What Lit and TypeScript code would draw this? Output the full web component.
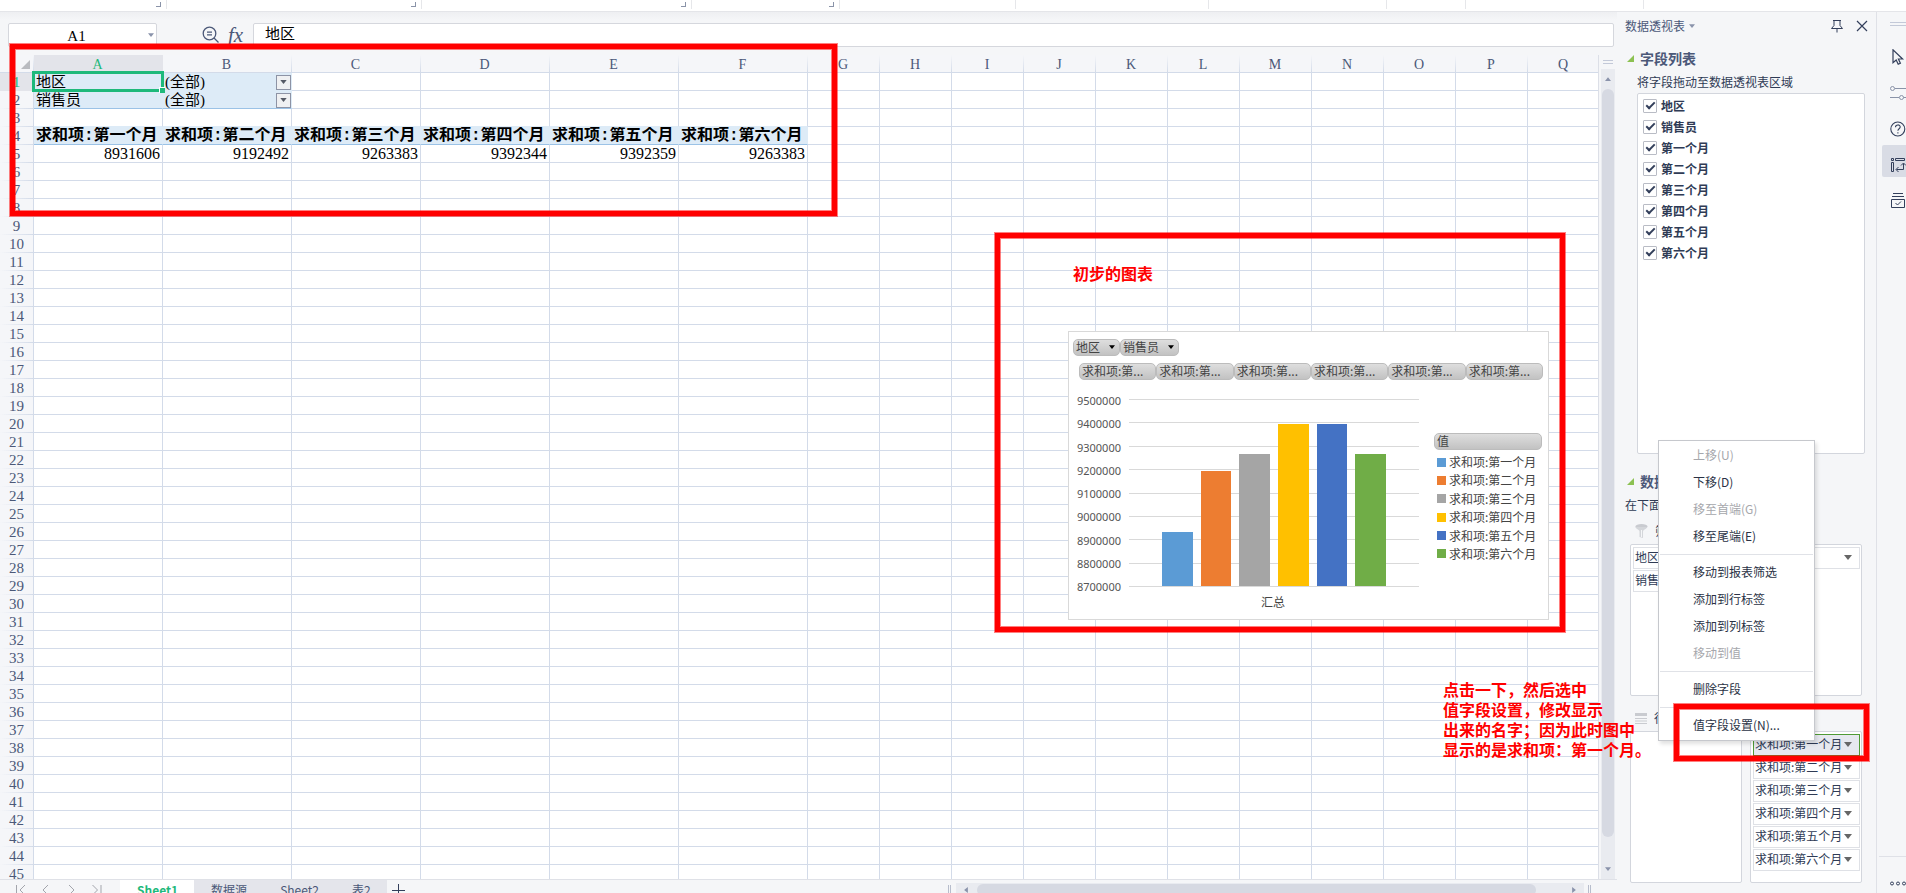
import { LitElement, html, css, svg, nothing } from "lit";
import { customElement, state } from "lit/decorators.js";
import { classMap } from "lit/directives/class-map.js";
import { styleMap } from "lit/directives/style-map.js";

const MONTHS = ["第一个月", "第二个月", "第三个月", "第四个月", "第五个月", "第六个月"];
const TOTALS = [8931606, 9192492, 9263383, 9392344, 9392359, 9263383];
const COLORS = ["#5b9bd5", "#ed7d31", "#a5a5a5", "#ffc000", "#4472c4", "#70ad47"];
const COLUMNS = "ABCDEFGHIJKLMNOPQ".split("");
const ROWS = Array.from({ length: 45 }, (_, i) => i + 1);
const AXIS_MIN = 8700000;
const AXIS_MAX = 9500000;
const TICKS = Array.from({ length: 9 }, (_, i) => AXIS_MAX - i * 100000);

const caret = svg`<svg class="caret" viewBox="0 0 8 5" width="8" height="5"><path d="M0 0h8L4 5z" fill="currentColor"/></svg>`;

/** Pivot chart floating over the worksheet. */
@customElement("pivot-chart")
export class PivotChart extends LitElement {
  static styles = css`
    :host {
      display: flex;
      flex-direction: column;
      box-sizing: border-box;
      border: 1px solid #d9d9d9;
      background: #fff;
      color: #444;
      font: 12px/16px "Noto Sans CJK SC", sans-serif;
      padding: 7px 5px 0 4px;
    }
    .row { display: flex; }
    .pill {
      display: flex;
      align-items: center;
      justify-content: space-between;
      height: 17px;
      padding: 0 4px 1px 2px;
      border: 1px solid #bcbcbc;
      border-radius: 5px;
      background: linear-gradient(#dedede, #c2c2c2);
      color: #444;
      font: inherit;
      line-height: 14px;
      box-sizing: border-box;
      white-space: nowrap;
    }
    .caret { color: #000; width: 6px; height: 4px; }
    .area { width: 47px; }
    .seller { width: 59px; }
    .values { margin: 7px 0 0 6px; }
    .values .pill { flex: 1; }
    .body { display: flex; margin-top: 10px; }
    .axis { width: 48px; text-align: right; font: 11px/22px "Noto Sans", sans-serif; color: #555; }
    .axis ul, .legend ul { list-style: none; margin: 0; padding: 0; }
    .axis ul { height: 208px; display: flex; flex-direction: column; justify-content: space-between; }
    .plotwrap { width: 290px; margin-left: 8px; padding-top: 9px; }
    .plot { position: relative; height: 188px; }
    .lines { display: flex; flex-direction: column; justify-content: space-between; height: 100%; }
    .lines i { height: 1px; background: #d9d9d9; }
    .bars {
      position: absolute;
      inset: 0 0 1px 0;
      display: flex;
      align-items: flex-end;
      gap: 8px;
      padding: 0 33px;
    }
    .bars span { flex: 1; }
    .category { text-align: center; margin-top: 7px; padding-right: 2px; }
    .legend { width: 108px; margin: 43px 0 0 15px; }
    .legend .pill { width: 100%; }
    .legend ul { margin-top: 4px; height: 110px; display: grid; grid-auto-rows: 18px; align-content: space-between; }
    .legend li { display: flex; align-items: center; gap: 3px; padding: 0 0 2px 3px; white-space: nowrap; }
    .swatch { width: 9px; height: 9px; }
  `;

  render() {
    return html`
      <div class="row">
        <button class="pill area">地区 ${caret}</button>
        <button class="pill seller">销售员 ${caret}</button>
      </div>
      <div class="row values">${MONTHS.map(() => html`<button class="pill">求和项:第...</button>`)}</div>
      <div class="body">
        <div class="axis"><ul>${TICKS.map((t) => html`<li>${t}</li>`)}</ul></div>
        <div class="plotwrap">
          <div class="plot">
            <div class="lines">${TICKS.map(() => html`<i></i>`)}</div>
            <div class="bars">
              ${TOTALS.map((v, i) => html`<span style=${styleMap({
                height: `${((v - AXIS_MIN) / (AXIS_MAX - AXIS_MIN)) * 100}%`,
                background: COLORS[i],
              })}></span>`)}
            </div>
          </div>
          <div class="category">汇总</div>
        </div>
        <div class="legend">
          <button class="pill">值</button>
          <ul>
            ${MONTHS.map((m, i) => html`<li><span class="swatch" style=${styleMap({ background: COLORS[i] })}></span>求和项:${m}</li>`)}
          </ul>
        </div>
      </div>`;
  }
}

/** Worksheet grid with the pivot table in its first rows. */
@customElement("work-sheet")
export class WorkSheet extends LitElement {
  static styles = css`
    :host { display: block; position: relative; overflow: hidden; background: #fff; }
    table { border-collapse: separate; border-spacing: 0; table-layout: fixed; width: 1600px; }
    col.head { width: 34px; }
    col.wide { width: 129px; }
    col.std { width: 72px; }
    th, td { box-sizing: border-box; height: 18px; padding: 0; overflow: hidden; white-space: nowrap; }
    thead th {
      border-bottom: 1px solid #d3dbe9;
      background: linear-gradient(#f5f6f9, #d3dbe9) right / 1px 100% no-repeat #f5f6f9;
      color: #4b5878;
      font: 14px/15px "Liberation Serif", serif;
      padding: 2px 2px 0 0;
    }
    thead th.sel { background: #e3e4ea; color: #1eb97b; }
    thead th svg { display: block; margin: 0 0 0 21px; }
    tbody th {
      border-right: 1px solid #d3dbe9;
      background: linear-gradient(90deg, #f5f6f9, #d3dbe9) bottom / 100% 1px no-repeat #f5f6f9;
      color: #4b5878;
      font: 15px/17px "Liberation Serif", serif;
      padding-top: 1px;
    }
    tbody th.sel { background: #e3e4ea; color: #1eb97b; }
    td {
      border-right: 1px solid #d3dbe9;
      border-bottom: 1px solid #d3dbe9;
      color: #000;
      font: 15px/16px "Liberation Serif", "Noto Sans CJK SC", serif;
      padding: 1px 2px 0;
    }
    td.fill { background: #ddebf7; border-color: #ddebf7; }
    td.under { border-bottom-color: #9bc2e6; }
    td.above { border-bottom-color: #ddebf7; }
    td.title { font: 700 16px/16px "Liberation Mono", "Noto Sans CJK SC", monospace; }
    td.num { font-size: 16px; text-align: right; }
    .cell { display: flex; justify-content: space-between; align-items: center; height: 16px; margin-right: -2px; }
    .cell button {
      display: grid;
      place-items: center;
      width: 15px;
      height: 15px;
      padding: 0;
      border: 1px solid #8d93a5;
      background: #eff0f2;
      color: #555a66;
    }
    .caret { width: 7px; height: 4px; }
    .cursor {
      position: absolute;
      left: 32px;
      top: 16px;
      width: 132px;
      height: 21px;
      box-sizing: border-box;
      border: 3px solid #1eb97b;
    }
    .cursor::after {
      content: "";
      position: absolute;
      right: -4px;
      bottom: -4px;
      width: 5px;
      height: 5px;
      background: #1eb97b;
      border: 1px solid #fff;
      border-width: 1px 0 0 1px;
    }
    pivot-chart { position: absolute; left: 1068px; top: 276px; width: 481px; height: 289px; }
  `;

  cell(row: number, col: number) {
    if (row <= 2 && col <= 1) {
      const label = row === 1 ? "地区" : "销售员";
      const cls = classMap({ fill: true, under: row === 2 });
      return col === 0
        ? html`<td class=${cls}>${label}</td>`
        : html`<td class=${cls}><div class="cell">(全部)<button aria-label=${`筛选${label}`}>${caret}</button></div></td>`;
    }
    if (row === 3 && col < 6) return html`<td class="above"></td>`;
    if (row === 4 && col < 6) return html`<td class="fill under title">求和项:${MONTHS[col]}</td>`;
    if (row === 5 && col < 6) return html`<td class="num">${TOTALS[col]}</td>`;
    return html`<td></td>`;
  }

  render() {
    return html`
      <table>
        <colgroup>
          <col class="head" />
          ${COLUMNS.map((_, i) => html`<col class=${i < 6 ? "wide" : "std"} />`)}
        </colgroup>
        <thead>
          <tr>
            <th><svg width="9" height="9" viewBox="0 0 9 9"><path d="M9 0v9H0z" fill="#b9bbc0" /></svg></th>
            ${COLUMNS.map((c, i) => html`<th class=${i === 0 ? "sel" : ""}>${c}</th>`)}
          </tr>
        </thead>
        <tbody>
          ${ROWS.map((r) => html`<tr><th class=${r === 1 ? "sel" : ""}>${r}</th>${COLUMNS.map((_, c) => this.cell(r, c))}</tr>`)}
        </tbody>
      </table>
      <div class="cursor"></div>
      <pivot-chart></pivot-chart>`;
  }
}

/** Task pane that lists the pivot fields and their areas. */
@customElement("pivot-panel")
export class PivotPanel extends LitElement {
  static styles = css`
    :host {
      display: flex;
      flex-direction: column;
      position: relative;
      box-sizing: border-box;
      background: #f5f6f8;
      border-right: 1px solid #dfe1e7;
      color: #2f3b55;
      font: 12px/20px "Noto Sans CJK SC", sans-serif;
      padding: 0 11px 10px 8px;
    }
    button { font: inherit; color: inherit; cursor: pointer; }
    .bar { display: flex; align-items: center; height: 20px; padding-top: 4px; margin: 0 -4px 10px 0; flex: none; color: #4b5878; }
    .bar .name { flex: 1; display: flex; align-items: center; gap: 4px; }
    .bar .caret { color: #8a93ab; width: 6px; height: 4px; }
    .bar button { border: 0; background: none; padding: 0; width: 14px; height: 14px; margin-left: 11px; display: block; color: #333f5b; }
    .bar button svg { display: block; }
    h2 {
      display: flex;
      align-items: center;
      gap: 6px;
      margin: 0;
      padding-left: 2px;
      height: 24px;
      font: 700 14px/24px "Noto Sans CJK SC", sans-serif;
      color: #4b5878;
      flex: none;
      white-space: nowrap;
    }
    .hint { margin: 2px 0 1px; padding-left: 12px; white-space: nowrap; flex: none; }
    .list {
      flex: 1 1 0;
      min-height: 180px;
      margin: 0 0 0 12px;
      padding: 1px 5px;
      border: 1px solid #d3d6dd;
      border-radius: 2px;
      background: #fff;
    }
    .list label { display: flex; align-items: center; gap: 4px; height: 21px; font-weight: 700; }
    .list input {
      appearance: none;
      flex: none;
      margin: 0;
      width: 14px;
      height: 14px;
      border: 1px solid #b9bcc5;
      border-radius: 1px;
      background: #fff;
      display: grid;
      place-items: center;
    }
    .list input:checked::after {
      content: "";
      width: 7px;
      height: 3px;
      border: solid #333f5b;
      border-width: 0 0 2px 2px;
      transform: translateY(-1px) rotate(-45deg);
    }
    .areas { margin-top: 15px; }
    .areas .hint { padding-left: 0; margin: 2px 0 5px; }
    .lab { display: flex; align-items: center; gap: 7px; height: 22px; padding: 0 0 2px 10px; }
    .zone {
      box-sizing: border-box;
      height: 152px;
      margin: 0;
      padding: 2px 1px 2px 2px;
      border: 1px solid #d3d6dd;
      border-radius: 2px;
      background: #fff;
      display: grid;
      grid-auto-rows: 22px;
      align-content: start;
      gap: 1px;
      flex: 1;
    }
    .zone button {
      display: flex;
      align-items: center;
      justify-content: space-between;
      padding: 0 7px 2px 1px;
      border: 1px solid #dfe1e6;
      background: #fff;
      text-align: left;
      white-space: nowrap;
      min-width: 0;
    }
    .zone .caret { color: #666; }
    .zone .active { border-color: #4f9a35; background: #e6e8ef; }
    .zone .short { width: 108px; }
    .filters { margin: 0 3px 0 5px; }
    .pair { display: grid; grid-template-columns: 1fr 1fr; column-gap: 8px; margin: 11px 3px 0 5px; }
    .pair .lab { padding-left: 5px; }
    .menu {
      position: absolute;
      left: 41px;
      top: 428px;
      width: 157px;
      box-sizing: border-box;
      padding: 1px 1px 1px;
      border: 1px solid #c6c8cd;
      background: #fff;
      box-shadow: 2px 3px 4px rgba(0, 0, 0, 0.12);
      display: flex;
      flex-direction: column;
    }
    .menu button { height: 27px; padding: 0 0 1px 33px; border: 0; background: none; text-align: left; color: #2a3245; }
    .menu button:hover:enabled { background: #eceef3; }
    .menu button:disabled { color: #a6a7ac; }
    .menu hr { width: 100%; box-sizing: border-box; height: 1px; margin: 4px 0; border: 0; border-top: 1px solid #e0e2e7; }
  `;

  @state() private checked = new Set(["地区", "销售员", ...MONTHS]);

  private toggle(f: string) {
    const next = new Set(this.checked);
    next.has(f) ? next.delete(f) : next.add(f);
    this.checked = next;
  }

  render() {
    const tri = svg`<svg width="7" height="7" viewBox="0 0 7 7"><path d="M7 0v7H0z" fill="#8cc152"/></svg>`;
    const menu: ([string, boolean] | null)[] = [
      ["上移(U)", false], ["下移(D)", true], ["移至首端(G)", false], ["移至尾端(E)", true], null,
      ["移动到报表筛选", true], ["添加到行标签", true], ["添加到列标签", true], ["移动到值", false], null,
      ["删除字段", true], null, ["值字段设置(N)...", true],
    ];
    return html`
      <div class="bar">
        <span class="name">数据透视表 ${caret}</span>
        <button aria-label="固定"><svg width="14" height="14" viewBox="0 0 14 14" fill="none" stroke="currentColor"><path d="M3 1.500h8M4 1.500v5L1.500 9.500h11L10 6.500V1.500M7 9.500V13.500" /></svg></button>
        <button aria-label="关闭"><svg width="14" height="14" viewBox="0 0 14 14" fill="none" stroke="currentColor" stroke-width="1.200"><path d="M2 2l10 10M12 2L2 12" /></svg></button>
      </div>
      <h2>${tri}字段列表</h2>
      <p class="hint">将字段拖动至数据透视表区域</p>
      <div class="list">
        ${["地区", "销售员", ...MONTHS].map((f) => html`<label><input type="checkbox" .checked=${this.checked.has(f)} @change=${() => this.toggle(f)} />${f}</label>`)}
      </div>
      <div class="areas">
        <h2>${tri}数据透视表区域</h2>
        <p class="hint">在下面区域中拖动字段</p>
        <div class="lab">
          <svg width="13" height="14" viewBox="0 0 13 14"><ellipse cx="6.500" cy="2.500" rx="6" ry="2.500" fill="#c9cbd0" /><path d="M.5 3c0 2 4 2.500 4 4.500V13l3.500 1V7.500c0-2 4-2.500 4-4.500z" fill="#d4d6da" /><path d="M6.500 6v7" stroke="#f5f6f8" /></svg>筛选器
        </div>
        <div class="zone filters">
          <button>地区 ${caret}</button>
          <button class="short">销售员 ${caret}</button>
        </div>
        <div class="pair">
          <div class="lab"><svg width="12" height="11" viewBox="0 0 12 11"><path d="M0 0h12v3H0zM0 5h12v1H0zM0 7.500h12v1H0zM0 10h12v1H0z" fill="#c9cbd0" /></svg>行</div>
          <div></div>
          <div class="zone"></div>
          <div class="zone">
            ${MONTHS.map((m, i) => html`<button class=${i === 0 ? "active" : nothing}>求和项:${m}${caret}</button>`)}
          </div>
        </div>
      </div>
      <div class="menu" role="menu">
        ${menu.map((m) => (m ? html`<button role="menuitem" ?disabled=${!m[1]}>${m[0]}</button>` : html`<hr />`))}
      </div>`;
  }
}

@customElement("app-root")
export class AppRoot extends LitElement {
  static styles = css`
    :host {
      display: flex;
      flex-direction: column;
      position: relative;
      height: 100vh;
      overflow: hidden;
      background: #f5f6f8;
      font: 12px/20px "Noto Sans CJK SC", sans-serif;
      color: #4b5878;
    }
    button { padding: 0; border: 0; background: none; color: inherit; font: inherit; cursor: pointer; }
    .ribbon { display: flex; flex: none; height: 9px; background: #fff; padding-bottom: 2px; border-bottom: 1px solid #e4e5e9; }
    .ribbon div { box-sizing: border-box; border-right: 1px solid #e6e7ea; position: relative; }
    .launch::after {
      content: "";
      position: absolute;
      right: 5px;
      top: 2px;
      width: 4px;
      height: 4px;
      border: solid #8a93a8;
      border-width: 0 1px 1px 0;
    }
    .work { display: flex; flex: 1; min-height: 0; }
    .book { flex: 1; min-width: 0; display: flex; flex-direction: column; }
    .formula { display: flex; flex: none; height: 24px; padding: 11px 3px 8px 8px; background: linear-gradient(#eeeff2, #f5f6f8 8px); }
    .box { display: flex; align-items: center; box-sizing: border-box; border: 1px solid #d5d7dd; border-radius: 2px; background: #fff; }
    .box input {
      flex: 1;
      min-width: 0;
      border: 0;
      padding: 0 0 2px;
      outline: 0;
      background: none;
      color: #000;
      font: 15px/20px "Liberation Serif", "Noto Sans CJK SC", serif;
    }
    .ref { width: 149px; padding-right: 2px; color: #8a93ab; }
    .ref input { text-align: center; padding: 1px 4px 0 0; }
    .ref .caret, .arrow .caret { width: 6px; height: 4px; }
    .tools { display: flex; align-items: center; gap: 8px; width: 96px; box-sizing: border-box; padding-left: 45px; }
    .fx { font: italic 21px/20px "Liberation Serif", serif; }
    .value { flex: 1; padding-left: 11px; }
    .middle { display: flex; flex: 1; min-height: 0; }
    work-sheet { flex: 1; min-width: 0; border-right: 1px solid #dcdfe7; }
    .gutter { width: 18px; box-sizing: border-box; padding: 5px 2px 0; display: flex; flex-direction: column; }
    .split { height: 2px; margin: 0 2px 5px; border: solid #c3c9d8; border-width: 1px 0; }
    .vtrack { flex: 1; display: flex; flex-direction: column; align-items: center; background: #e9ebf0; }
    .arrow { display: grid; place-items: center; width: 14px; height: 20px; color: #8a93ab; }
    .up .caret { transform: rotate(180deg); }
    .vthumb { width: 12px; flex: 1; border-radius: 6px; background: #d6d9e2; margin-bottom: 22px; }
    .tabs { display: flex; flex: none; height: 13px; border-top: 1px solid #dfe1e7; overflow: hidden; align-items: flex-start; }
    .nav { display: flex; width: 120px; box-sizing: border-box; padding: 4px 17px 0 15px; justify-content: space-between; color: #a3a5ac; }
    .nav svg, .plus svg { display: block; }
    .tab { height: 26px; padding: 0 16px 6px 17px; background: #e4e5eb; line-height: 20px; flex: none; }
    .tab.on { background: #fff; color: #1eb97b; font-weight: 700; margin-top: -1px; padding-top: 1px; }
    .plus { padding: 4px 5px; color: #333f5b; }
    .fill { flex: 1; }
    .vsplit { width: 1px; height: 13px; margin: 5px 5px 0 4px; border: solid #b7bdcc; border-width: 0 1px; }
    .htrack { display: flex; width: 628px; height: 13px; margin-top: 3px; background: #e9ebf0; }
    .htrack .arrow { height: 14px; width: 20px; }
    .left .caret { transform: rotate(90deg); }
    .right .caret { transform: rotate(-90deg); }
    .hthumb { flex: 1; height: 12px; border-radius: 6px; background: #d6d9e2; margin: 1px 28px 0 1px; }
    .end { width: 21px; }
    pivot-panel { width: 260px; flex: none; }
    .side { width: 29px; flex: none; display: flex; flex-direction: column; align-items: stretch; overflow: hidden; }
    .side .grip { height: 2px; margin: 10px 0 11px 13px; border: solid #c3c9d8; border-width: 1px 0; }
    .side button { display: block; height: 32px; margin: 0 0 4px 5px; padding: 8px 0 0 8px; text-align: left; color: #333f5b; flex: none; }
    .side button.on { background: #d9dce5; border-radius: 2px 0 0 2px; }
    .side button svg { display: block; }
    .side .more { margin-top: auto; margin-left: 2px; margin-bottom: 0; padding: 0 0 10px 11px; border-top: 1px solid #dfe1e7; height: 35px; box-sizing: border-box; display: flex; align-items: center; padding-top: 26px; }
    .mark { position: absolute; box-sizing: border-box; border: 5px solid #f00; box-shadow: 0 0 0 1px #ff000080, inset 0 0 0 1px #ff000080; pointer-events: none; }
    .note { position: absolute; margin: 0; color: #f00; font-size: 16px; font-weight: 700; white-space: nowrap; pointer-events: none; }
    .m1 { left: 10px; top: 44px; width: 827px; height: 172px; }
    .m2 { left: 995px; top: 233px; width: 570px; height: 399px; }
    .m3 { left: 1674px; top: 704px; width: 195px; height: 57px; }
    .n1 { left: 1073px; top: 263px; }
    .n2 { left: 1443px; top: 679px; }
  `;

  private groups = [167, 255, 270, 148, 176, 193, 178, 79, 178];

  render() {
    return html`
      <div class="ribbon">
        ${this.groups.map((w, i) => html`<div class=${i < 4 ? "launch" : ""} style=${styleMap({ width: `${w}px` })}></div>`)}
      </div>
      <div class="work">
        <div class="book">
          <div class="formula">
            <div class="box ref"><input aria-label="名称框" value="A1" />${caret}</div>
            <div class="tools">
              <svg width="18" height="18" viewBox="0 0 18 18" fill="none" stroke="#4b5878" stroke-width="1.300"><circle cx="7.500" cy="7.500" r="6.300" /><path d="M12 12l4.500 4.500M5 6.200h5M5 8.800h5" /></svg>
              <span class="fx">fx</span>
            </div>
            <div class="box value"><input aria-label="编辑栏" value="地区" /></div>
          </div>
          <div class="middle">
            <work-sheet></work-sheet>
            <div class="gutter">
              <div class="split"></div>
              <div class="vtrack">
                <button class="arrow up" aria-label="向上">${caret}</button>
                <div class="vthumb"></div>
                <button class="arrow" aria-label="向下">${caret}</button>
              </div>
            </div>
          </div>
          <div class="tabs">
            <div class="nav">
              ${[["首张", "M1.500 1v10M10 1L5 6l5 5"], ["上一张", "M8 1L3 6l5 5"], ["下一张", "M3 1l5 5-5 5"], ["末张", "M10 1v10M1.500 1l5 5-5 5"]].map(
                ([n, d]) => html`<button aria-label=${n}><svg width="12" height="12" viewBox="0 0 12 12" fill="none" stroke="currentColor"><path d=${d} /></svg></button>`
              )}
            </div>
            <button class="tab on">Sheet1</button>
            <button class="tab">数据源</button>
            <button class="tab">Sheet2</button>
            <button class="tab">表2</button>
            <button class="plus" aria-label="新建工作表"><svg width="13" height="13" viewBox="0 0 13 13" stroke="currentColor"><path d="M6.500 0v13M0 6.500h13" /></svg></button>
            <div class="fill"></div>
            <div class="vsplit"></div>
            <div class="htrack">
              <button class="arrow left" aria-label="向左">${caret}</button>
              <div class="hthumb"></div>
              <button class="arrow right" aria-label="向右">${caret}</button>
            </div>
            <div class="vsplit"></div>
            <div class="end"></div>
          </div>
        </div>
        <pivot-panel></pivot-panel>
        <div class="side">
          <div class="grip"></div>
          <button aria-label="选择"><svg width="16" height="16" viewBox="0 0 16 16" fill="none" stroke="currentColor" stroke-width="1.200"><path d="M3 .8v13l3.200-2.800 2 4.200 2.200-1-2-4.200h4.200z" /></svg></button>
          <button aria-label="属性"><svg width="16" height="16" viewBox="0 0 16 16" fill="none" stroke="#8a93a8"><circle cx="2.500" cy="3.500" r="2" /><path d="M5 3.500h11M0 12.500h9M13.500 12.500H16" /><circle cx="11.500" cy="12.500" r="2" /></svg></button>
          <button aria-label="帮助"><svg width="16" height="16" viewBox="0 0 16 16" fill="none" stroke="currentColor" stroke-width="1.100"><circle cx="7.800" cy="8" r="7" /><path d="M5.500 6.200c0-3 4.700-3 4.700-.2 0 1.700-2.300 1.800-2.300 3.800M7.900 11.300v1.300" /></svg></button>
          <button class="on" aria-label="数据透视表"><svg width="16" height="16" viewBox="0 0 16 16" fill="none" stroke="currentColor"><path d="M1.500 1.500h2v2h-2zM5.500 1.500h9v2h-9zM1.500 5.500h2v9h-2zM13.500 6.500v6h-7M11 8.500l2.500-2.500L16 8.500M8.500 10L6 12.500 8.500 15" /></svg></button>
          <button aria-label="备份"><svg width="16" height="16" viewBox="0 0 16 16" fill="none" stroke="currentColor"><path d="M3 .5h10M2 3.500h12M1.500 6.500h13v8h-13zM5.500 10l2 2L11 8.500" /></svg></button>
          <button class="more" aria-label="更多"><svg width="16" height="5" viewBox="0 0 16 5" fill="none" stroke="currentColor"><circle cx="2" cy="2.500" r="1.500" /><circle cx="8" cy="2.500" r="1.500" /><circle cx="14" cy="2.500" r="1.500" /></svg></button>
        </div>
      </div>
      <div class="mark m1"></div>
      <div class="mark m2"></div>
      <div class="mark m3"></div>
      <p class="note n1">初步的图表</p>
      <p class="note n2">点击一下，然后选中<br />值字段设置，修改显示<br />出来的名字；因为此时图中<br />显示的是求和项：第一个月。</p>`;
  }
}
